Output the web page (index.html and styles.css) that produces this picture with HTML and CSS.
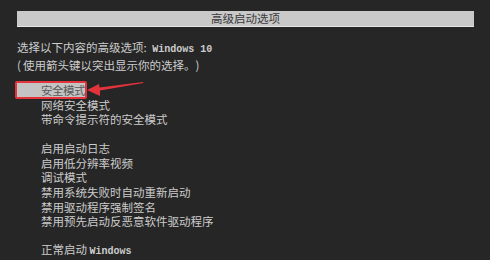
FILE: index.html
```html
<!DOCTYPE html>
<html>
  <head>
    <title>高级启动选项</title>
    <link rel="stylesheet" href="styles.css">
  </head>
  <body>
    <div class="screen">
      <div class="title-bar">高级启动选项</div>

      <p class="intro">
        选择以下内容的高级选项: <span class="en os">Windows 10</span><br>
        <span class="paren">(</span>使用箭头键以突出显示你的选择。<span class="paren">)</span>
      </p>

      <ul class="options first">
        <li><span class="selected">安全模式</span></li>
        <li>网络安全模式</li>
        <li>带命令提示符的安全模式</li>
      </ul>

      <ul class="options">
        <li>启用启动日志</li>
        <li>启用低分辨率视频</li>
        <li>调试模式</li>
        <li>禁用系统失败时自动重新启动</li>
        <li>禁用驱动程序强制签名</li>
        <li>禁用预先启动反恶意软件驱动程序</li>
      </ul>

      <ul class="options last">
        <li>正常启动 <span class="en">Windows</span></li>
      </ul>

      <svg class="arrow" width="70" height="24" viewBox="0 0 70 24">
        <polygon points="2,10 14,4 14.5,7.5 58,2 58.5,3 15,10.5 15,16" fill="#e3343c"/>
      </svg>
    </div>
  </body>
</html>
```

FILE: styles.css
```css
* {
  font-family: 'Noto Sans CJK SC', sans-serif;
}

body, html {
  margin: 0;
  padding: 0;
  background-color: #262626;
}

.screen {
  position: relative;
  width: 490px;
  height: 260px;
  padding: 11px 16px 0 17px;
  box-sizing: border-box;
  color: #cccccc;
  font-size: 11.5px;
  line-height: 14.6px;
}

.title-bar {
  height: 15px;
  line-height: 15px;
  background-color: #c9c9c9;
  color: #3a3a3a;
  text-align: center;
  font-size: 11.5px;
  border-bottom: 1px solid #e6e6e6;
}

.intro {
  margin: 13px 0 0 0;
}

.en {
  font-family: 'Liberation Mono', monospace;
  font-size: 10px;
  font-weight: bold;
}

.en.os {
  margin-left: 3px;
}

.paren {
  display: inline-block;
  width: 6px;
}

.options {
  list-style: none;
  margin: 14.2px 0 0 0;
  padding: 0 0 0 24px;
}

.options.first {
  margin-top: 11px;
}

.options.last {
  margin-top: 13px;
}

.selected {
  display: inline-block;
  margin: -2px 0 -2px -26px;
  padding: 0 0 0 24px;
  white-space: nowrap;
  height: 14px;
  line-height: 14px;
  letter-spacing: -0.5px;
  background-color: #c4c4c4;
  color: #5a5a5a;
  border: 2px solid #e3343c;
  border-radius: 2px;
}

.arrow {
  position: absolute;
  left: 85px;
  top: 80px;
}
```
